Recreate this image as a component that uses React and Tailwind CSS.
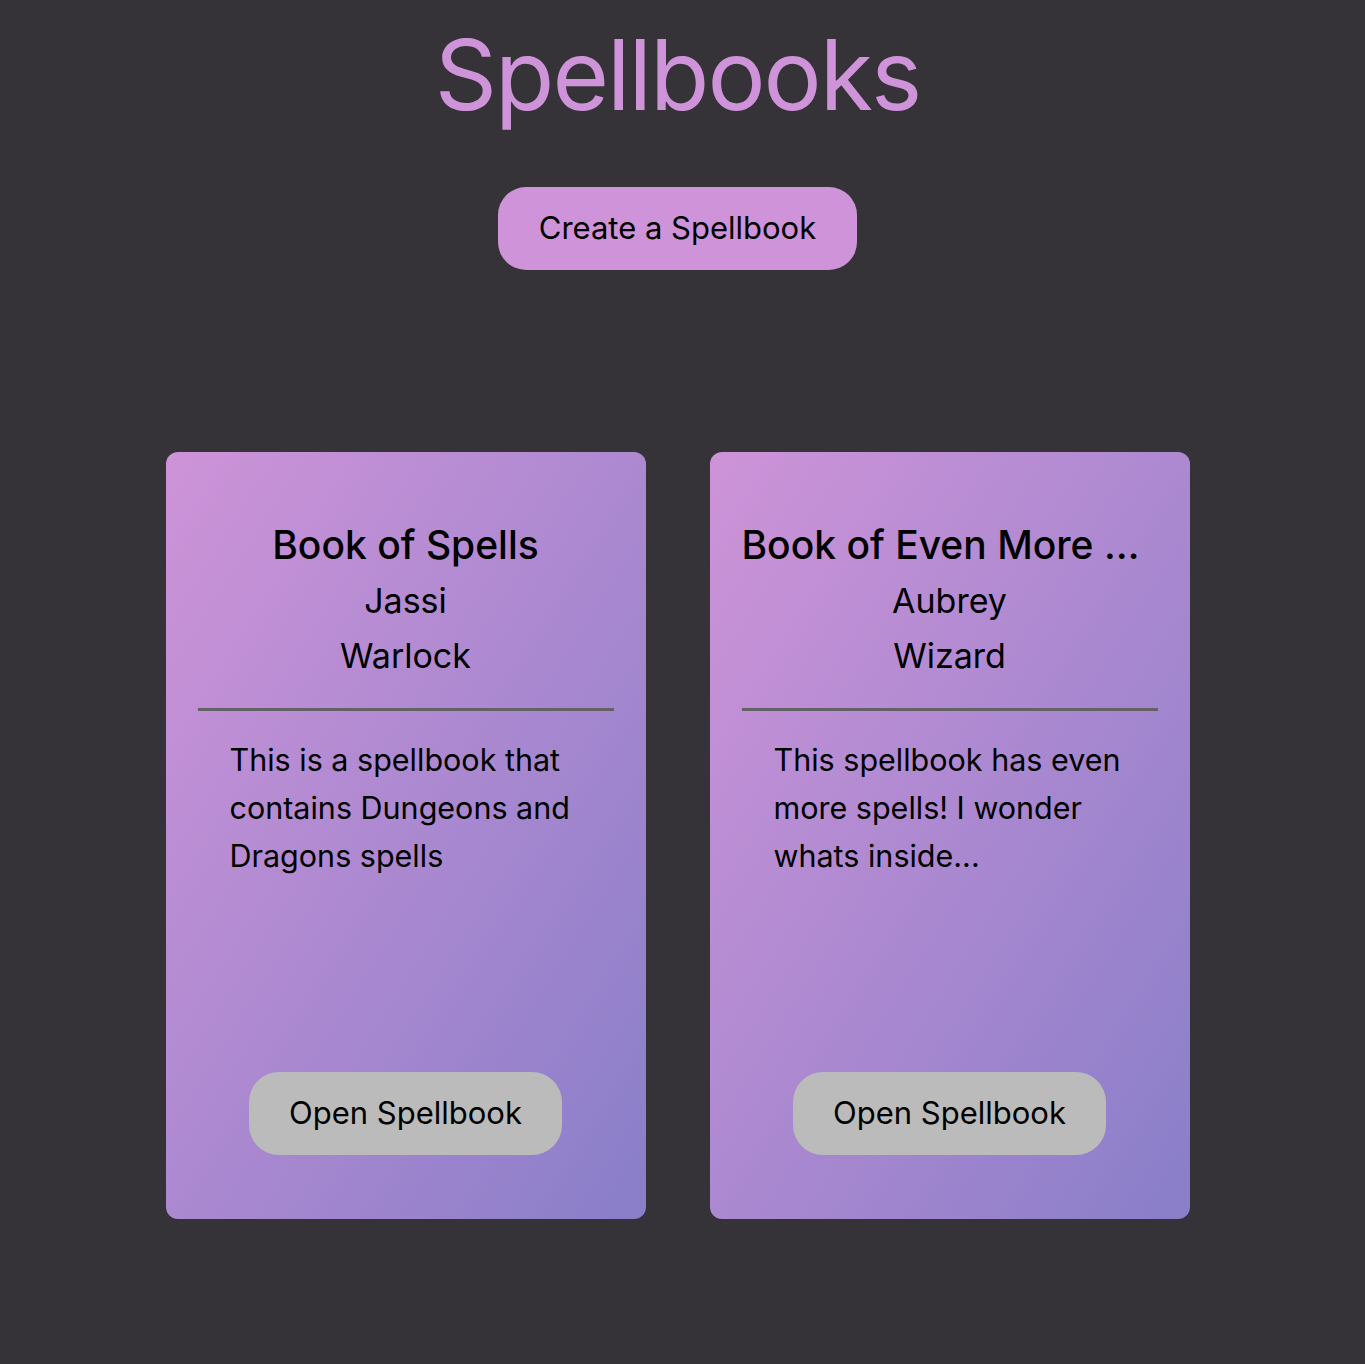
import React from "react";

const books = [
  {
    title: "Book of Spells",
    owner: "Jassi",
    cls: "Warlock",
    description: "This is a spellbook that contains Dungeons and Dragons spells",
  },
  {
    title: "Book of Even More Spells",
    owner: "Aubrey",
    cls: "Wizard",
    description: "This spellbook has even more spells! I wonder whats inside...",
  },
];

function BookCard({ book }) {
  return (
    <div className="flex h-[767px] w-[480px] flex-col rounded-[12px] bg-linear-to-br from-[#ce93d8] to-[#897ec9] px-8 pb-16 pt-[65px] text-black">
      <h2 className="truncate text-center text-[39px] font-medium leading-[56px]">{book.title}</h2>
      <p className="text-center text-[34px] leading-[55px]">{book.owner}</p>
      <p className="text-center text-[34px] leading-[55px]">{book.cls}</p>
      <div className="mt-[25px] h-[3px] w-full bg-[#636066]" />
      <p className="mt-[25px] px-8 text-[30.5px] leading-[48px]">{book.description}</p>
      <div className="mt-auto flex justify-center">
        <button className="h-[83px] w-[313px] rounded-[30px] bg-[#bbbbbb] text-[31px] text-black">
          Open Spellbook
        </button>
      </div>
    </div>
  );
}

export default function App() {
  return (
    <div
      className="min-h-[1364px] bg-[#353337] pb-[145px] pr-[10px]"
      style={{ fontFamily: "Inter, 'Noto Sans', sans-serif" }}
    >
      <h1 className="pt-[20px] text-center text-[97px] leading-[110px] tracking-[-2px] text-[#ce93d8]">
        Spellbooks
      </h1>
      <div className="mt-[57px] flex justify-center">
        <button className="h-[83px] w-[359px] rounded-[28px] bg-[#ce93d8] text-[31px] text-black">
          Create a Spellbook
        </button>
      </div>
      <div className="mt-[182px] flex justify-center gap-16">
        {books.map((b) => (
          <BookCard key={b.title} book={b} />
        ))}
      </div>
    </div>
  );
}
